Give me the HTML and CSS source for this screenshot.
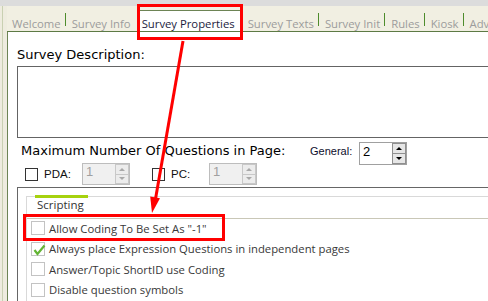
FILE: index.html
```html
<!DOCTYPE html>
<html>
<head>
<meta charset="utf-8">
<link rel="stylesheet" href="styles.css">
</head>
<body>
<div class="topstrip"></div>
<div class="window">
  <div class="rail"></div>
  <div class="tabsarea">
    <div class="tabbar">
      <span class="tab">Welcome</span><span class="sep"></span>
      <span class="tab">Survey Info</span>
      <span class="tab active">Survey Properties</span>
      <span class="tab">Survey Texts</span><span class="sep"></span>
      <span class="tab">Survey Init</span><span class="sep"></span>
      <span class="tab">Rules</span><span class="sep"></span>
      <span class="tab">Kiosk</span><span class="sep"></span>
      <span class="tab">Adv</span>
    </div>
    <div class="panel">
      <div class="desc">Survey Description:</div>
      <div class="textarea"></div>
      <div class="maxrow">
        <span class="maxlabel">Maximum Number Of Questions in Page:</span>
        <span class="general">General:</span>
        <div class="spin">
          <span class="val">2</span>
          <div class="btns"><span class="btn up"></span><span class="btn down"></span></div>
        </div>
      </div>
      <div class="devrow">
        <span class="cb"></span><span class="devlabel">PDA:</span>
        <div class="spin disabled">
          <span class="val">1</span>
          <div class="btns"><span class="btn up"></span><span class="btn down"></span></div>
        </div>
        <span class="cb cb-pc"></span><span class="devlabel">PC:</span>
        <div class="spin disabled">
          <span class="val">1</span>
          <div class="btns"><span class="btn up"></span><span class="btn down"></span></div>
        </div>
      </div>
      <div class="group">
        <div class="inner">
          <div class="innertabs"><span class="innertab">Scripting</span></div>
          <div class="list">
            <div class="item"><span class="cb2"></span><span>Allow Coding To Be Set As "-1"</span></div>
            <div class="item"><span class="cb2"><svg class="check" viewBox="0 0 14 14" width="14" height="14"><polyline points="2.5,7 5.5,11 12.5,2.5" fill="none" stroke="#63b535" stroke-width="2.2"/></svg></span><span>Always place Expression Questions in independent pages</span></div>
            <div class="item"><span class="cb2"></span><span>Answer/Topic ShortID use Coding</span></div>
            <div class="item"><span class="cb2"></span><span>Disable question symbols</span></div>
          </div>
        </div>
      </div>
    </div>
  </div>
</div>
<svg class="annot" width="488" height="301" viewBox="0 0 488 301">
  <rect x="138.5" y="5.5" width="103" height="33" fill="none" stroke="#ff0000" stroke-width="3"/>
  <rect x="24.5" y="215.5" width="199" height="24" fill="none" stroke="#ff0000" stroke-width="3"/>
  <line x1="183" y1="41" x2="155.5" y2="199" stroke="#ff0000" stroke-width="3"/>
  <polygon points="152,213 160,198.2 150.2,196.4" fill="#ff0000"/>
</svg>
</body>
</html>
```
FILE: styles.css
```css
html, body {
  margin: 0;
  padding: 0;
}
body {
  width: 488px;
  height: 301px;
  overflow: hidden;
  position: relative;
  background: #f1efe2;
  font-family: "Open Sans", "Noto Sans", sans-serif;
}
.topstrip {
  height: 6px;
  background: #dcdcdc;
}
.window {
  display: flex;
  height: 295px;
}
.rail {
  width: 7px;
  flex: none;
  background: linear-gradient(to right, #eeecdf 0 2px, #c9d0b2 2px 3px, #eeecdf 3px 7px);
}
.tabsarea {
  flex: 1;
  min-width: 0;
  display: flex;
  flex-direction: column;
}
.tabbar {
  height: 25px;
  flex: none;
  border-bottom: 1px solid #5d7a45;
  display: flex;
  align-items: flex-end;
  padding-left: 5px;
  white-space: nowrap;
  overflow: hidden;
  position: relative;
}
.tab {
  font-size: 11.3px;
  line-height: 14px;
  padding-top: 6px;
  color: #9c9c9c;
  flex: none;
}
.tab.active {
  color: #1c1c40;
  background: #ffffff;
  border-top: 1px solid #6d8455;
  padding: 6px 5px 1px 5px;
  margin: 0 8px -1px 6px;
}
.sep {
  width: 1px;
  height: 13px;
  background: #4e8c2c;
  margin: 0 6px 5px 4px;
  flex: none;
}
.panel {
  flex: 1;
  background: #ffffff;
  border-left: 1px solid #6d8455;
  padding: 15px 0 0 9px;
  overflow: hidden;
}
.desc {
  font: 13px/15px "DejaVu Sans", Verdana, sans-serif;
  color: #000;
}
.textarea {
  margin-top: 4px;
  height: 70px;
  border: 1px solid #646464;
  border-right: none;
}
.maxrow {
  display: flex;
  align-items: flex-start;
  margin-top: 4px;
}
.maxlabel {
  font: 13px/15px "DejaVu Sans", Verdana, sans-serif;
  color: #000;
  margin: 1px 0 0 4px;
  width: 289px;
  flex: none;
  white-space: nowrap;
}
.general {
  font: 11px/13px "Liberation Sans", Arial, sans-serif;
  color: #0d0d2b;
  margin-top: 3px;
  width: 49px;
  flex: none;
}
.spin {
  display: flex;
  width: 46px;
  height: 21px;
  border: 1px solid #a0a0a0;
  background: #fff;
  flex: none;
}
.spin .val {
  flex: 1;
  font: 13px/17px "Liberation Sans", Arial, sans-serif;
  padding-left: 3px;
  color: #000;
}
.btns {
  width: 14px;
  display: flex;
  flex-direction: column;
}
.btn {
  flex: 1;
  border: 1px solid #8f8f8f;
  background: #e6e6e6;
  display: flex;
  align-items: center;
  justify-content: center;
}
.btn.down {
  margin-top: -1px;
}
.btn.up::after {
  content: "";
  border-left: 3px solid transparent;
  border-right: 3px solid transparent;
  border-bottom: 3px solid #000;
}
.btn.down::after {
  content: "";
  border-left: 3px solid transparent;
  border-right: 3px solid transparent;
  border-top: 3px solid #000;
}
.devrow {
  display: flex;
  align-items: center;
  margin-top: -2px;
  height: 22px;
}
.cb {
  width: 11px;
  height: 11px;
  border: 1px solid #333;
  background: #fff;
  margin-left: 8px;
  flex: none;
}
.cb-pc {
  margin-left: 22px;
}
.devlabel {
  font: 11.5px/14px "Liberation Sans", Arial, sans-serif;
  color: #111;
  margin-left: 6px;
  width: 38px;
  flex: none;
}
.spin.disabled {
  height: 20px;
  border-color: #bdbdbd;
  background: #f0f0f0;
}
.spin.disabled .val {
  color: #a0a0a0;
  line-height: 16px;
}
.spin.disabled .btn {
  border-color: #c8c8c8;
  background: #ececec;
}
.spin.disabled .btn.up::after {
  border-bottom-color: #a8a8a8;
}
.spin.disabled .btn.down::after {
  border-top-color: #a8a8a8;
}
.group {
  margin-top: 2px;
  border-top: 1px solid #666;
  border-left: 1px solid #666;
  padding: 8px 0 0 8px;
  height: 120px;
}
.inner {
  border-top: 1px solid #d9d9d9;
  border-left: 1px solid #d9d9d9;
  height: 110px;
}
.innertabs {
  height: 21px;
  display: flex;
  padding-left: 8px;
}
.innertab {
  margin-top: -2px;
  border-top: 3px solid #a6d20e;
  width: 51px;
  padding: 0 0 0 2px;
  font-size: 11.5px;
  line-height: 14px;
  color: #333;
}
.list {
  border-top: 1px solid #c9c7b7;
  padding-left: 4px;
}
.item {
  height: 20.5px;
  display: flex;
  align-items: center;
  gap: 4px;
  font-size: 11.3px;
  color: #383838;
  white-space: nowrap;
}
.item:first-child {
  margin-top: -1px;
}
.cb2 {
  width: 12px;
  height: 12px;
  border: 1px solid #c3c3c3;
  background: #fff;
  flex: none;
  position: relative;
}
.check {
  position: absolute;
  left: 0;
  top: 0;
}
.annot {
  position: absolute;
  left: 0;
  top: 0;
  pointer-events: none;
}
```
